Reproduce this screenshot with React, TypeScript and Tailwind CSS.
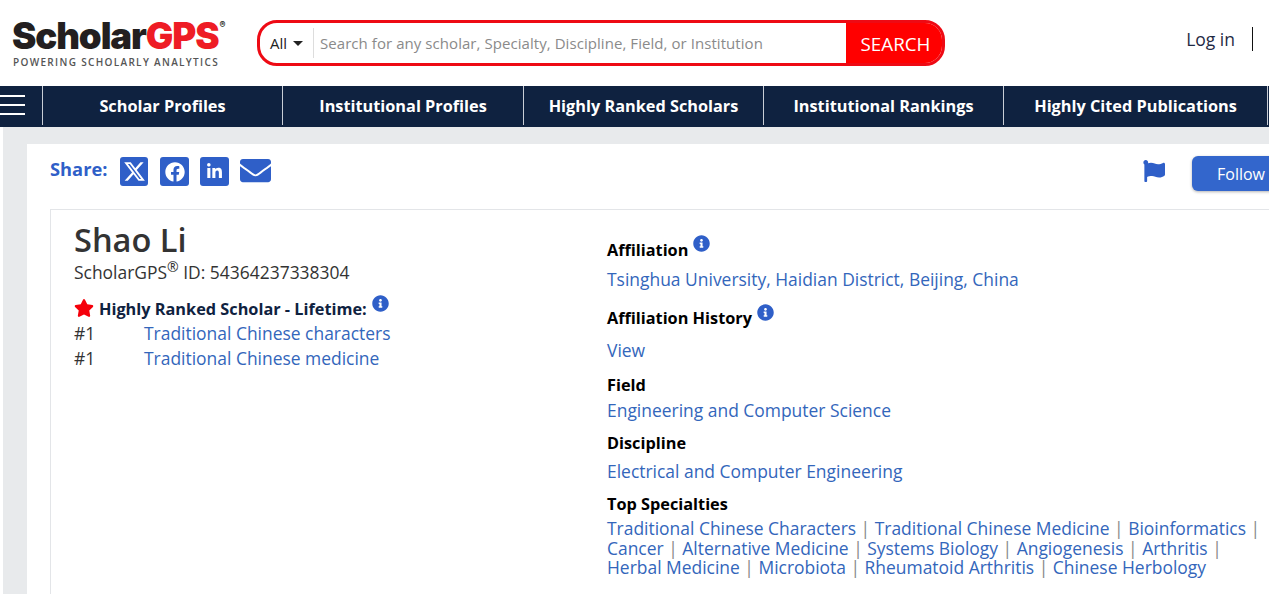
import { Fragment } from 'react'
import { FaFacebook, FaLinkedinIn, FaEnvelope, FaFlag, FaStar, FaInfoCircle } from 'react-icons/fa'
import { FaXTwitter } from 'react-icons/fa6'

const specialtyLines = [
    ['Traditional Chinese Characters', 'Traditional Chinese Medicine', 'Bioinformatics'],
    ['Cancer', 'Alternative Medicine', 'Systems Biology', 'Angiogenesis', 'Arthritis'],
    ['Herbal Medicine', 'Microbiota', 'Rheumatoid Arthritis', 'Chinese Herbology'],
]

function Info() {
    return <FaInfoCircle className="w-[17px] h-[17px] text-[#2f5fc8]" />
}

function NavItem({ label, width }: { label: string; width: string }) {
    return (
        <div className={`${width} shrink-0 border-r border-[#c9ced6] mb-[2px] pt-[2px] flex items-center justify-center text-white font-bold text-[16.3px]`}>
            {label}
        </div>
    )
}

export default function App() {
    return (
        <div className="w-[1269px] h-[594px] overflow-hidden bg-white font-['Open_Sans',sans-serif] text-[#333]">
            <header className="h-[86px] flex items-center">
                <div className="w-[257px] pl-3 shrink-0">
                    <div className="flex items-start font-['Inter',sans-serif] font-black text-[36.6px] leading-[36px] tracking-[-1.1px] text-[#231f20]">
                        Scholar<span className="text-[#ee1c25]">GPS</span>
                        <span className="text-[9px] leading-[10px] font-bold ml-[1px] mt-[2px] tracking-normal">®</span>
                    </div>
                    <div className="font-semibold text-[10px] leading-[12px] tracking-[1.33px] text-[#555] mt-[2px] pl-[1px]">POWERING SCHOLARLY ANALYTICS</div>
                </div>
                <div className="w-[688px] h-[46px] -mt-[1px] flex border-[3px] border-[#ee0a14] rounded-[20px] overflow-hidden shrink-0">
                    <div className="w-[53px] pt-[2px] flex items-center pl-[10px] gap-[6px] text-[15px] text-[#222]">
                        All
                        <span className="border-x-[5px] border-x-transparent border-t-[5px] border-t-[#222]"></span>
                    </div>
                    <div className="flex-1 flex items-center border-l border-[#ddd] my-[5px] pl-[6px] pt-[2px] text-[15px] text-[#8a8a8a] tracking-[0.06px]">
                        Search for any scholar, Specialty, Discipline, Field, or Institution
                    </div>
                    <div className="w-[96px] bg-[#ff0000] text-white flex items-center justify-center text-[18.8px] pt-[4px] pl-[3px]">SEARCH</div>
                </div>
                <div className="ml-auto mr-4 -mt-[8px] h-6 pt-[1px] flex items-center border-r border-[#111] pr-[17px] text-[17.5px] text-[#1f2a44]">Log in</div>
            </header>

            <nav className="h-[41px] bg-[#0f2240] flex">
                <div className="w-[43px] shrink-0 border-r border-[#c9ced6] flex flex-col gap-[7px] pt-[9px] mb-[2px]">
                    <div className="w-[25px] h-[2px] bg-white"></div>
                    <div className="w-[25px] h-[2px] bg-white"></div>
                    <div className="w-[25px] h-[2px] bg-white"></div>
                </div>
                <NavItem label="Scholar Profiles" width="w-[240px]" />
                <NavItem label="Institutional Profiles" width="w-[241px]" />
                <NavItem label="Highly Ranked Scholars" width="w-[240px]" />
                <NavItem label="Institutional Rankings" width="w-[240px]" />
                <NavItem label="Highly Cited Publications" width="w-[264px]" />
            </nav>

            <div className="ml-[3px] h-[467px] bg-[#e8eaec] pt-[17px] pl-[24px]">
                <main className="h-full bg-white pl-[23px]">
                    <div className="h-[65px] flex pt-[13px] -mr-[33px]">
                        <span className="text-[18.3px] leading-[24px] font-bold text-[#2f5fc8] mr-[13px]">Share:</span>
                        <div className="w-[28px] h-[29px] bg-[#2f5fc8] rounded-[3px] flex items-center justify-center text-white mr-[12px]">
                            <FaXTwitter className="w-[23px] h-[23px]" />
                        </div>
                        <div className="w-[29px] h-[29px] bg-[#2f5fc8] rounded-[3px] flex items-center justify-center text-white mr-[11px]">
                            <FaFacebook className="w-[20px] h-[20px]" />
                        </div>
                        <div className="w-[29px] h-[29px] bg-[#2f5fc8] rounded-[3px] flex items-center justify-center text-white mr-[11px]">
                            <FaLinkedinIn className="w-[17px] h-[17px]" />
                        </div>
                        <FaEnvelope className="w-[31px] h-[31px] -mt-[2px] text-[#2f5fc8]" />
                        <FaFlag className="ml-auto w-[22px] h-[24px] mt-[2px] text-[#2f5fc8]" />
                        <div className="ml-[27px] mt-[-1px] w-[110px] h-[35px] shrink-0 bg-[#3366cc] rounded-[6px] shadow-[0_1px_3px_rgba(0,0,0,0.3)] text-white text-[16px] pl-[25px] flex items-center">Follow</div>
                    </div>
                    <div className="h-full border-l border-t border-[#e3e5e8] grid grid-cols-[556px_1fr] pl-[23px]">
                        <div>
                            <h1 className="text-[32.6px] leading-[40px] mt-[10px] font-semibold text-[#333]">Shao Li</h1>
                            <div className="text-[17.45px] leading-[23px] mt-[1px] text-[#333]">ScholarGPS<sup className="text-[14px]">®</sup> ID: 54364237338304</div>
                            <div className="flex items-start mt-[13px] text-[16.3px] leading-[24px] font-bold text-[#0f2240]">
                                <FaStar className="w-[20px] h-[20px] text-[#f5000b] mr-[5px] mt-[1px]" />
                                Highly Ranked Scholar - Lifetime:
                                <span className="ml-[5px] -mt-[2px]"><Info /></span>
                            </div>
                            <div className="flex text-[17.45px] leading-[25px]">
                                <span className="w-[70px]">#1</span>
                                <span className="text-[#3366bb]">Traditional Chinese characters</span>
                            </div>
                            <div className="flex text-[17.45px] leading-[25px]">
                                <span className="w-[70px]">#1</span>
                                <span className="text-[#3366bb]">Traditional Chinese medicine</span>
                            </div>
                        </div>
                        <div className="-ml-[23px] pt-[27px] text-[17.45px] text-[#3366bb]">
                            <div className="flex items-start text-[16.3px] leading-[26px] font-bold text-black">
                                Affiliation<span className="ml-[5px] -mt-[2px]"><Info /></span>
                            </div>
                            <div className="leading-[30px] mt-[1px]">Tsinghua University, Haidian District, Beijing, China</div>
                            <div className="flex items-start text-[16.3px] leading-[26px] font-bold text-black mt-[11px]">
                                Affiliation History<span className="ml-[5px] -mt-[1px]"><Info /></span>
                            </div>
                            <div className="leading-[30px] mt-[4px]">View</div>
                            <div className="text-[16.3px] leading-[26px] font-bold text-black mt-[7px]">Field</div>
                            <div className="leading-[28px] -mt-[2px]">Engineering and Computer Science</div>
                            <div className="text-[16.3px] leading-[26px] font-bold text-black mt-[6px]">Discipline</div>
                            <div className="leading-[28px] mt-[1px]">Electrical and Computer Engineering</div>
                            <div className="text-[16.3px] leading-[26px] font-bold text-black mt-[6px]">Top Specialties</div>
                            <div className="leading-[19.5px] mt-[2px]">
                                {specialtyLines.map((line, i) => (
                                    <div key={i} className="flex whitespace-nowrap">
                                        {line.map((s, j) => (
                                            <Fragment key={s}>
                                                <span>{s}</span>
                                                {(j < line.length - 1 || i < 2) && <span className="text-[#888] mx-[4.5px]">|</span>}
                                            </Fragment>
                                        ))}
                                    </div>
                                ))}
                            </div>
                        </div>
                    </div>
                </main>
            </div>
        </div>
    )
}
